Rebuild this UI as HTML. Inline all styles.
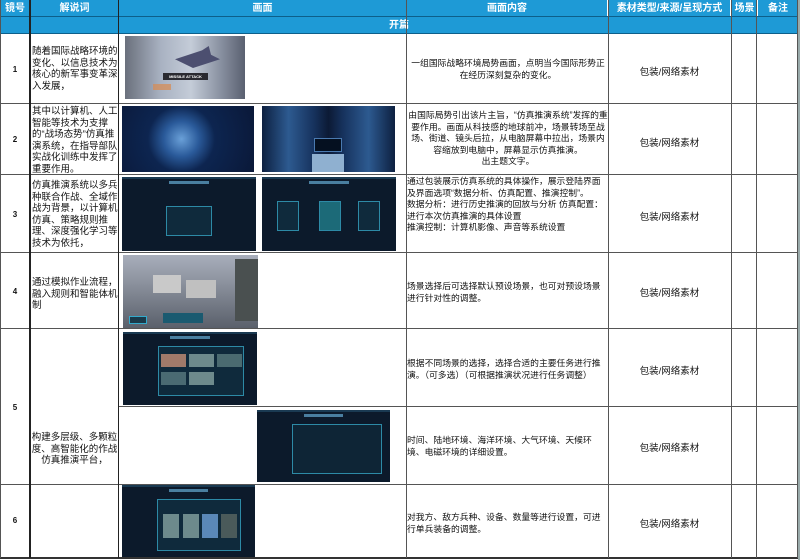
<!DOCTYPE html>
<html><head><meta charset="utf-8"><style>
*{margin:0;padding:0;box-sizing:border-box}
body{width:800px;height:560px;background:#fff;position:relative;overflow:hidden;font-family:"Liberation Sans","Noto Sans CJK SC",sans-serif;color:#111}
.a{position:absolute}
.hl{position:absolute;left:0;width:798px;height:1px;background:#555}
.vl{position:absolute;top:0;width:1px;height:558px;background:#555}
.hd{position:absolute;top:0;height:17px;background:#1e9ad6;color:#fff;font-weight:bold;font-size:10px;line-height:17px;text-align:center;white-space:nowrap}
.num{position:absolute;left:0;width:30px;font-size:8px;font-weight:bold;text-align:center}
.nar{position:absolute;left:32px;width:87px;font-size:9.5px;line-height:11.6px}
.ct{position:absolute;left:407px;width:202px;font-size:8.8px;line-height:11.5px}
.mt{position:absolute;left:608px;width:123px;font-size:9.5px;text-align:center}
.dk{position:absolute;background:#0c1a2b;border-top:2px solid #1a3a52}
.dk .t{position:absolute;top:2px;left:35%;width:30%;height:3px;background:#4a7fa0}
.pn{position:absolute;border:1px solid #2d8aa6;background:#0f2a3c}
.sm{position:absolute;background:#6d8a8c}
</style></head><body>
<div class="hd" style="left:0;width:30px">镜号</div>
<div class="hd" style="left:31px;width:87px">解说词</div>
<div class="hd" style="left:119px;width:287px">画面</div>
<div class="hd" style="left:407px;width:200px">画面内容</div>
<div class="hd" style="left:609px;width:121px">素材类型/来源/呈现方式</div>
<div class="hd" style="left:732px;width:25px">场景</div>
<div class="hd" style="left:758px;width:40px">备注</div>
<div class="a" style="left:0;top:17px;width:798px;height:17px;background:#1e9ad6;color:#fff;font-weight:bold;font-size:10px;line-height:17px;text-align:center">开篇</div>
<div class="a" style="left:0;top:16px;width:798px;height:1px;background:#0d5f8a"></div>
<div class="a" style="left:0;top:33px;width:798px;height:1px;background:#0d5f8a"></div>
<div class="a" style="left:798px;top:0;width:2px;height:560px;background:#9aa"></div>

<div class="hl" style="top:103px"></div>
<div class="hl" style="top:174px"></div>
<div class="hl" style="top:252px"></div>
<div class="hl" style="top:328px"></div>
<div class="hl" style="top:406px;left:118px;width:680px"></div>
<div class="hl" style="top:484px"></div>
<div class="hl" style="top:557px;height:2px;background:#333"></div>
<div class="vl" style="left:0"></div>
<div class="vl" style="left:29px;width:2px;background:#222"></div>
<div class="vl" style="left:118px;background:#222"></div>
<div class="vl" style="left:406px"></div>
<div class="vl" style="left:608px"></div>
<div class="vl" style="left:731px"></div>
<div class="vl" style="left:756px"></div>
<div class="vl" style="left:797px"></div>

<div class="num" style="top:65px">1</div>
<div class="num" style="top:135px">2</div>
<div class="num" style="top:210px">3</div>
<div class="num" style="top:287px">4</div>
<div class="num" style="top:403px">5</div>
<div class="num" style="top:516px">6</div>

<div class="nar" style="top:46px">随着国际战略环境的变化、以信息技术为核心的新军事变革深入发展，</div>
<div class="nar" style="top:106px">其中以计算机、人工智能等技术为支撑的“战场态势”仿真推演系统，在指导部队实战化训练中发挥了重要作用。</div>
<div class="nar" style="top:180px">仿真推演系统以多兵种联合作战、全域作战为背景，以计算机仿真、策略规则推理、深度强化学习等技术为依托，</div>
<div class="nar" style="top:277px">通过模拟作业流程，融入规则和智能体机制</div>
<div class="nar" style="top:432px;text-align:center;left:31px">构建多层级、多颗粒度、高智能化的作战仿真推演平台，</div>

<div class="ct" style="top:58px;text-align:center">一组国际战略环境局势画面，点明当今国际形势正在经历深刻复杂的变化。</div>
<div class="ct" style="top:110px;text-align:center">由国际局势引出该片主旨，“仿真推演系统”发挥的重要作用。画面从科技感的地球前冲，场景转场至战场、街道、镜头后拉，从电脑屏幕中拉出，场景内容缩放到电脑中，屏幕显示仿真推演。<br>出主题文字。</div>
<div class="ct" style="top:176px">通过包装展示仿真系统的具体操作，展示登陆界面及界面选项“数据分析、仿真配置、推演控制”。<br>数据分析：进行历史推演的回放与分析 仿真配置：进行本次仿真推演的具体设置<br>推演控制：计算机影像、声音等系统设置</div>
<div class="ct" style="top:281px">场景选择后可选择默认预设场景，也可对预设场景进行针对性的调整。</div>
<div class="ct" style="top:358px">根据不同场景的选择，选择合适的主要任务进行推演。（可多选）（可根据推演状况进行任务调整）</div>
<div class="ct" style="top:435px">时间、陆地环境、海洋环境、大气环境、天候环境、电磁环境的详细设置。</div>
<div class="ct" style="top:512px">对我方、敌方兵种、设备、数量等进行设置，可进行单兵装备的调整。</div>

<div class="mt" style="top:64px">包装/网络素材</div>
<div class="mt" style="top:135px">包装/网络素材</div>
<div class="mt" style="top:209px">包装/网络素材</div>
<div class="mt" style="top:285px">包装/网络素材</div>
<div class="mt" style="top:363px">包装/网络素材</div>
<div class="mt" style="top:440px">包装/网络素材</div>
<div class="mt" style="top:516px">包装/网络素材</div>

<div class="a" style="left:125px;top:36px;width:120px;height:63px;background:linear-gradient(90deg,#6a707c 0%,#a9b2c2 30%,#c4ccd8 55%,#8890a0 80%,#5a6070 100%)">
<div class="a" style="left:50px;top:10px;width:45px;height:22px;background:#4c4f70;clip-path:polygon(0 60%,60% 20%,75% 0,80% 40%,100% 60%,40% 100%)"></div>
<div class="a" style="left:38px;top:37px;width:45px;height:7px;background:#2a2a30;color:#fff;font-size:4px;line-height:7px;text-align:center;font-weight:bold">MISSILE ATTACK</div>
<div class="a" style="left:28px;top:48px;width:18px;height:6px;background:#d98a50;opacity:.7"></div>
</div>
<div class="a" style="left:122px;top:106px;width:132px;height:66px;background:radial-gradient(circle at 45% 50%,#6aa0d8 0,#2a5a9a 22%,#0d2550 42%,#0a1838 100%)"></div>
<div class="a" style="left:262px;top:106px;width:133px;height:66px;background:linear-gradient(90deg,#0d2040,#2d5a90 20%,#15305a 40%,#0c1a35 50%,#15305a 60%,#2d5a90 80%,#0d2040)">
<div class="a" style="left:52px;top:32px;width:28px;height:14px;background:#051020;border:1px solid #4a7ab0"></div>
<div class="a" style="left:50px;top:48px;width:32px;height:18px;background:#8fb0d0"></div></div>
<div class="dk" style="left:122px;top:177px;width:134px;height:74px"><div class="t"></div>
<div class="pn" style="left:44px;top:27px;width:46px;height:30px"></div></div>
<div class="dk" style="left:262px;top:177px;width:134px;height:74px"><div class="t"></div>
<div class="pn" style="left:15px;top:22px;width:22px;height:30px"></div>
<div class="pn" style="left:57px;top:22px;width:22px;height:30px;background:#1c6a78"></div>
<div class="pn" style="left:96px;top:22px;width:22px;height:30px"></div></div>
<div class="a" style="left:123px;top:255px;width:135px;height:73px;background:linear-gradient(180deg,#a8aebb 0%,#8a909c 40%,#5a606b 100%)">
<div class="a" style="left:30px;top:20px;width:28px;height:18px;background:#c9c9c9"></div>
<div class="a" style="left:63px;top:25px;width:30px;height:18px;background:#c0c0c0"></div>
<div class="a" style="left:112px;top:4px;width:23px;height:62px;background:#4a5050"></div>
<div class="a" style="left:40px;top:58px;width:40px;height:10px;background:#1a5a70"></div>
<div class="a" style="left:6px;top:61px;width:18px;height:8px;background:#1a3a4a;border:1px solid #3ac"></div></div>
<div class="dk" style="left:123px;top:332px;width:134px;height:73px"><div class="t"></div>
<div class="pn" style="left:35px;top:12px;width:86px;height:50px"></div>
<div class="sm" style="left:38px;top:20px;width:25px;height:13px;background:#a07a6a"></div>
<div class="sm" style="left:66px;top:20px;width:25px;height:13px"></div>
<div class="sm" style="left:94px;top:20px;width:25px;height:13px;background:#4a6a70"></div>
<div class="sm" style="left:38px;top:38px;width:25px;height:13px;background:#4a6a72"></div>
<div class="sm" style="left:66px;top:38px;width:25px;height:13px"></div></div>
<div class="dk" style="left:257px;top:410px;width:133px;height:72px"><div class="t"></div>
<div class="pn" style="left:35px;top:12px;width:90px;height:50px;background:#0e2536"></div></div>
<div class="dk" style="left:122px;top:485px;width:133px;height:72px"><div class="t"></div>
<div class="pn" style="left:35px;top:12px;width:84px;height:52px"></div>
<div class="sm" style="left:41px;top:27px;width:16px;height:24px"></div>
<div class="sm" style="left:61px;top:27px;width:16px;height:24px"></div>
<div class="sm" style="left:80px;top:27px;width:16px;height:24px;background:#5a88b8"></div>
<div class="sm" style="left:99px;top:27px;width:16px;height:24px;background:#4a5a5a"></div></div>
</body></html>
